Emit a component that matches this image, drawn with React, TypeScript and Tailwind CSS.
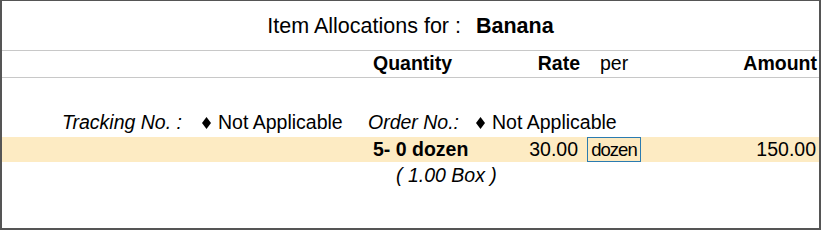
import React from 'react'

const font = { fontFamily: '"Liberation Sans", Arial, sans-serif' }

function Diamond() {
  return (
    <svg width="9" height="12" viewBox="0 0 9 12" className="mr-[7px] shrink-0">
      <polygon points="4.5,0 9,6 4.5,12 0,6" fill="#000" />
    </svg>
  )
}

export default function App() {
  return (
    <div
      className="w-[821px] h-[230px] bg-white text-black border-t border-l-2 border-r-2 border-b-2 border-[#555555] overflow-hidden"
      style={font}
    >
      {/* title */}
      <div className="h-[50px] flex items-center justify-center pt-[1px] border-b border-[#c8c8c8]">
        <span className="text-[21.5px]">Item Allocations for :</span>
        <span className="text-[21.5px] font-bold ml-[15px]">Banana</span>
      </div>

      {/* column headers */}
      <div className="h-[27px] flex items-center text-[19.5px] border-b border-[#c8c8c8]">
        <div className="w-[371px]" />
        <div className="w-[120px] font-bold">Quantity</div>
        <div className="w-[87px] font-bold text-right">Rate</div>
        <div className="w-[70px] pl-[20px]">per</div>
        <div className="flex-1 font-bold text-right pr-[2px]">Amount</div>
      </div>

      {/* tracking / order */}
      <div className="mt-[33px] h-[24px] flex items-center text-[19.5px]">
        <div className="w-[60px]" />
        <div className="w-[140px] italic">Tracking No. :</div>
        <Diamond />
        <div className="w-[150px]">Not Applicable</div>
        <div className="w-[108px] italic">Order No.:</div>
        <Diamond />
        <div>Not Applicable</div>
      </div>

      {/* allocation row */}
      <div className="mt-[2px] h-[25px] flex items-center text-[19.5px] bg-[#fdebc3]">
        <div className="w-[371px]" />
        <div className="w-[120px] font-bold">5- 0 dozen</div>
        <div className="w-[85px] text-right">30.00</div>
        <div className="w-[72px] h-full pl-[9px]">
          <div className="w-[54px] h-full border border-[#2b7bb0] bg-[#fdeac0] flex items-center justify-center text-[18.5px] tracking-[-1px]">
            dozen
          </div>
        </div>
        <div className="flex-1 text-right pr-[3px]">150.00</div>
      </div>

      {/* alternate unit */}
      <div className="mt-[2px] h-[24px] flex items-center text-[19.5px] italic pl-[394px]">( 1.00 Box )</div>
    </div>
  )
}
